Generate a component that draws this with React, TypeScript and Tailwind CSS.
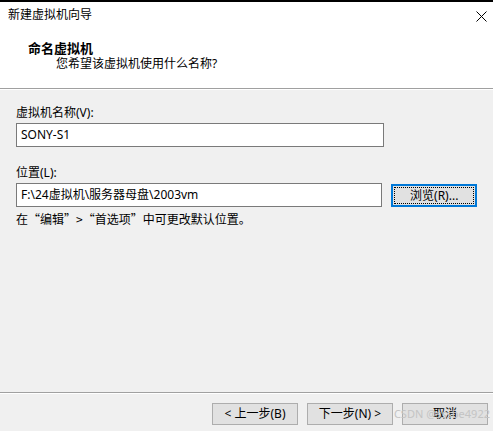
import React from "react";

const font = { fontFamily: '"Noto Sans", "Noto Sans CJK SC", sans-serif' };
const cjk = { fontFamily: '"Noto Sans CJK SC", "Noto Sans", sans-serif' };

function Btn({ children, className = "" }: { children: React.ReactNode; className?: string }) {
  return (
    <div
      className={
        "h-[22px] w-[86px] flex items-center justify-center bg-[#e1e1e1] border border-[#adadad] text-[12px] text-black leading-none " +
        className
      }
    >
      {children}
    </div>
  );
}

export default function App() {
  return (
    <div
      className="relative w-[493px] h-[431px] overflow-hidden bg-[#f0f0f0] flex flex-col text-black"
      style={font}
    >
      <div className="h-[2px] bg-black shrink-0" />
      <div className="h-[86px] bg-white flex flex-col shrink-0">
        <div className="h-[26px] flex items-center justify-between pl-2 pr-[6px]">
          <span className="text-[12px] leading-none">新建虚拟机向导</span>
          <svg width="11" height="11" viewBox="0 0 11 11" className="mt-[2px]">
            <path d="M0.5 0.5 L10.5 10.5 M10.5 0.5 L0.5 10.5" stroke="#000" strokeWidth="1" />
          </svg>
        </div>
        <div className="mt-[13px] pl-[28px] h-[15px] flex items-center text-[13px] font-bold leading-none">
          命名虚拟机
        </div>
        <div className="pl-[56px] h-[16px] flex items-center text-[12px] leading-none">
          您希望该虚拟机使用什么名称?
        </div>
      </div>
      <div className="h-[1px] bg-[#a0a0a0] shrink-0" />
      <div className="h-[1px] bg-white shrink-0" />

      <div className="flex-1 flex flex-col px-4 pt-[15px]">
        <div className="h-[16px] flex items-center text-[12px] leading-none">虚拟机名称(V):</div>
        <div className="mt-[2px] w-[368px] h-[24px] bg-white border border-[#7a7a7a] flex items-center pl-[4px] text-[12px] leading-none">
          SONY-S1
        </div>
        <div className="mt-[18px] h-[16px] flex items-center text-[12px] leading-none">位置(L):</div>
        <div className="mt-[2px] flex items-start gap-[9px]">
          <div className="w-[368px] h-[24px] bg-white border border-[#7a7a7a] flex items-center pl-[4px] text-[12px] leading-none">
            F:\24虚拟机\服务器母盘\2003vm
          </div>
          <div className="relative mt-[1px] w-[86px] h-[23px] bg-[#e1e1e1] border-2 border-[#0078d7] flex items-center justify-center text-[12px] leading-none">
            <div className="absolute inset-[1px] border border-dotted border-black" />
            <span>浏览(R)...</span>
          </div>
        </div>
        <div className="mt-[4px] h-[16px] flex items-center text-[12px] leading-none" style={cjk}>
          在“编辑”&gt;“首选项”中可更改默认位置。
        </div>
      </div>

      <div className="h-[1px] bg-[#a0a0a0] shrink-0" />
      <div className="h-[1px] bg-white shrink-0" />
      <div className="h-[37px] shrink-0 flex items-start justify-end pt-[9px] pr-[5px] gap-[9px]">
        <Btn>&lt; 上一步(B)</Btn>
        <Btn>下一步(N) &gt;</Btn>
        <Btn>取消</Btn>
      </div>

      <div className="absolute right-[3px] bottom-[12px] text-[11px] leading-none text-[#c4c4c4] pointer-events-none">
        CSDN @sssbe4922
      </div>
    </div>
  );
}
